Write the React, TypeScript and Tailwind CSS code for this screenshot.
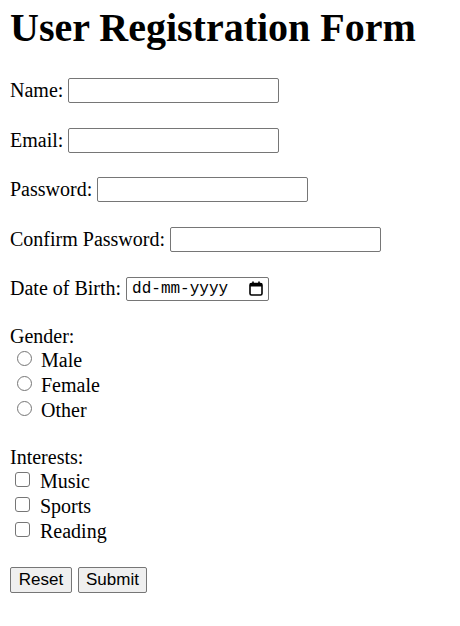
import { useState } from "react";

const serif = "font-['Liberation_Serif','Times_New_Roman',serif]";

const Field = ({ label, type = "text" }: { label: string; type?: string }) => (
  <div className="flex items-center h-[25px]">
    <label className="text-[20px] leading-[23px] mr-[5px]">{label}</label>
    <input
      type={type}
      className="w-[211px] h-[25px] border border-[#767676] rounded-[2px] bg-white px-[2px] outline-none text-[16px] font-['Liberation_Sans',Arial,sans-serif]"
    />
  </div>
);

const CalendarIcon = () => (
  <svg width="14" height="15" viewBox="0 0 14 15" fill="none">
    <rect x="1" y="2.5" width="12" height="11.5" rx="1.5" stroke="#000" strokeWidth="1.6" />
    <rect x="1" y="2.5" width="12" height="3" fill="#000" />
    <rect x="3.2" y="0.5" width="1.6" height="3" fill="#000" />
    <rect x="9.2" y="0.5" width="1.6" height="3" fill="#000" />
  </svg>
);

const App = () => {
  const [gender, setGender] = useState("");
  const [interests, setInterests] = useState<string[]>([]);

  const toggle = (v: string) =>
    setInterests((prev) => (prev.includes(v) ? prev.filter((x) => x !== v) : [...prev, v]));

  return (
    <div className={`${serif} text-black bg-white min-h-[626px] px-[10px] pt-[5px]`}>
      <h1 className="text-[40px] leading-[46px] font-bold">User Registration Form</h1>

      <form className="mt-[27px]" onSubmit={(e) => e.preventDefault()}>
        <div className="flex flex-col gap-[24.5px]">
          <Field label="Name:" />
          <Field label="Email:" type="email" />
          <Field label="Password:" type="password" />
          <Field label="Confirm Password:" type="password" />

          {/* Date of birth */}
          <div className="flex items-center h-[25px]">
            <label className="text-[20px] leading-[23px] mr-[5px]">Date of Birth:</label>
            <div className="w-[143px] h-[24px] border border-[#767676] rounded-[2px] flex items-center justify-between pl-[5px] pr-[5px]">
              <span className="font-['Liberation_Mono','Courier_New',monospace] text-[16px] leading-none">
                dd-mm-yyyy
              </span>
              <CalendarIcon />
            </div>
          </div>
        </div>

        {/* Gender */}
        <div className="mt-[24px] text-[20px]">
          <div className="h-[23px] leading-[23px]">Gender:</div>
          {["Male", "Female", "Other"].map((g) => (
            <label key={g} className="flex items-center h-[25px] leading-[23px]">
              <input
                type="radio"
                name="gender"
                checked={gender === g}
                onChange={() => setGender(g)}
                className="appearance-none w-[15px] h-[15px] rounded-full border border-[#767676] bg-white ml-[7px] mr-[9px] -mt-[4px]"
              />
              {g}
            </label>
          ))}
        </div>

        {/* Interests */}
        <div className="mt-[23px] text-[20px]">
          <div className="h-[23px] leading-[23px]">Interests:</div>
          {["Music", "Sports", "Reading"].map((i) => (
            <label key={i} className="flex items-center h-[25px] leading-[23px]">
              <input
                type="checkbox"
                checked={interests.includes(i)}
                onChange={() => toggle(i)}
                className="appearance-none w-[15px] h-[15px] rounded-[3px] border border-[#767676] bg-white ml-[5px] mr-[10px] -mt-[4px]"
              />
              {i}
            </label>
          ))}
        </div>

        {/* Buttons */}
        <div className="mt-[22.5px] flex gap-[6px] font-['Liberation_Sans',Arial,sans-serif] text-[17px]">
          <button type="reset" className="h-[26px] w-[62px] bg-[#efefef] border border-[#767676] rounded-[2px] leading-none">
            Reset
          </button>
          <button type="submit" className="h-[26px] w-[69px] bg-[#efefef] border border-[#767676] rounded-[2px] leading-none">
            Submit
          </button>
        </div>
      </form>
    </div>
  );
};

export default App;
